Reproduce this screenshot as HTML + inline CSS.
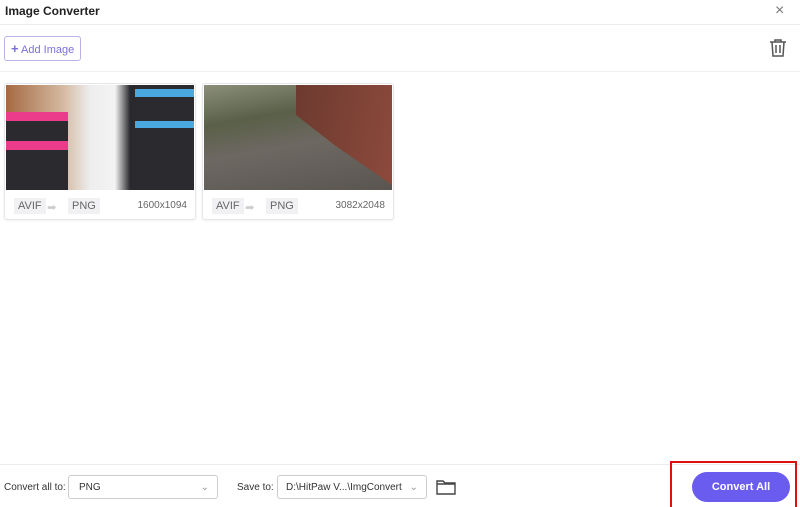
<!DOCTYPE html>
<html><head><style>
body{margin:0;width:800px;height:505px;background:#fff;font-family:"Liberation Sans",sans-serif;position:relative;overflow:hidden;color:#333}
.a{position:absolute}
.card{position:absolute;top:83px;width:190px;height:135px;border:1px solid #e6e6ea;border-radius:3px;background:#fff;box-shadow:0 1px 2px rgba(0,0,0,.06)}
.tag{position:absolute;top:114px;font-size:11px;color:#666;background:#f1f1f3;padding:2px 4px}
.sz{position:absolute;right:8px;top:116px;font-size:10px;color:#666}
.sel{position:absolute;top:475px;height:24px;border:1px solid #ccc;border-radius:3px;font-size:10px;line-height:24px;padding-left:10px;box-sizing:border-box;background:#fff}
</style></head><body>
<div class="a" style="left:5px;top:4px;font-size:12px;font-weight:bold;color:#222">Image Converter</div>
<div class="a" style="left:775px;top:2px;font-size:16px;color:#777">×</div>
<div class="a" style="left:0;top:24px;width:800px;height:1px;background:#ececf0"></div>
<div class="a" style="left:4px;top:36px;width:77px;height:25px;border:1px solid #b8b2e6;border-radius:3px;font-size:11px;line-height:24px;color:#7a70d8;box-sizing:border-box;padding-left:6px"><b style="font-size:13px">+</b> Add Image</div>
<svg class="a" style="left:768px;top:38px" width="20" height="20" viewBox="0 0 20 20" fill="none" stroke="#555" stroke-width="1.5"><path d="M2 4h16M7 4V2h6v2M4 4l1 14h10l1-14M8 7v8M12 7v8"/></svg>
<div class="a" style="left:0;top:71px;width:800px;height:1px;background:#f0f0f3"></div>

<div class="card" style="left:4px">
<div class="a" style="left:1px;top:1px;width:188px;height:105px;background:linear-gradient(90deg,#a56a42 0%,#d4b8a0 30%,#eee 45%,#f3f3f3 58%,#2a2a2e 66%,#222 100%)"></div>
<div class="a" style="left:1px;top:28px;width:62px;height:78px;background:#2b2b2f"></div>
<div class="a" style="left:1px;top:28px;width:62px;height:9px;background:#ea3c8a"></div>
<div class="a" style="left:1px;top:57px;width:62px;height:9px;background:#ea3c8a"></div>
<div class="a" style="left:130px;top:1px;width:59px;height:105px;background:#2b2b2f"></div>
<div class="a" style="left:130px;top:5px;width:59px;height:8px;background:#4aa8e0"></div>
<div class="a" style="left:130px;top:37px;width:59px;height:7px;background:#4aa8e0"></div>
<div class="tag" style="left:9px">AVIF</div><div class="a" style="left:42px;top:117px;color:#ccc;font-size:11px">➡</div>
<div class="tag" style="left:63px">PNG</div>
<div class="sz">1600x1094</div>
</div>
<div class="card" style="left:202px">
<div class="a" style="left:1px;top:1px;width:188px;height:105px;background:linear-gradient(170deg,#8b8f7a 0%,#5a6048 30%,#6d6862 55%,#5a5550 100%)"></div>
<div class="a" style="left:93px;top:1px;width:96px;height:100px;background:linear-gradient(100deg,#6d3a30,#8c4a3c);clip-path:polygon(0 0,100% 0,100% 100%,40% 60%,0 30%)"></div>
<div class="tag" style="left:9px">AVIF</div><div class="a" style="left:42px;top:117px;color:#ccc;font-size:11px">➡</div>
<div class="tag" style="left:63px">PNG</div>
<div class="sz">3082x2048</div>
</div>

<div class="a" style="left:0;top:464px;width:800px;height:1px;background:#ececf0"></div>
<div class="a" style="left:4px;top:482px;font-size:10px;color:#333">Convert all to:</div>
<div class="sel" style="left:68px;width:150px">PNG<span style="position:absolute;right:8px;color:#999">⌄</span></div>
<div class="a" style="left:237px;top:482px;font-size:10px;color:#333">Save to:</div>
<div class="sel" style="left:277px;width:150px;padding-left:8px">D:\HitPaw V...\ImgConvert<span style="position:absolute;right:8px;color:#999">⌄</span></div>
<svg class="a" style="left:436px;top:479px" width="20" height="16" viewBox="0 0 20 16" fill="none" stroke="#444" stroke-width="1.4"><path d="M1 2h6l2 2h10v11H1z M1 5h18"/></svg>
<div class="a" style="left:670px;top:461px;width:123px;height:44px;border:2px solid #e01010;border-bottom:none"></div>
<div class="a" style="left:692px;top:472px;width:98px;height:30px;border-radius:15px;background:#6b5cf0;color:#fff;font-size:11px;font-weight:bold;text-align:center;line-height:30px">Convert All</div>
</body></html>
